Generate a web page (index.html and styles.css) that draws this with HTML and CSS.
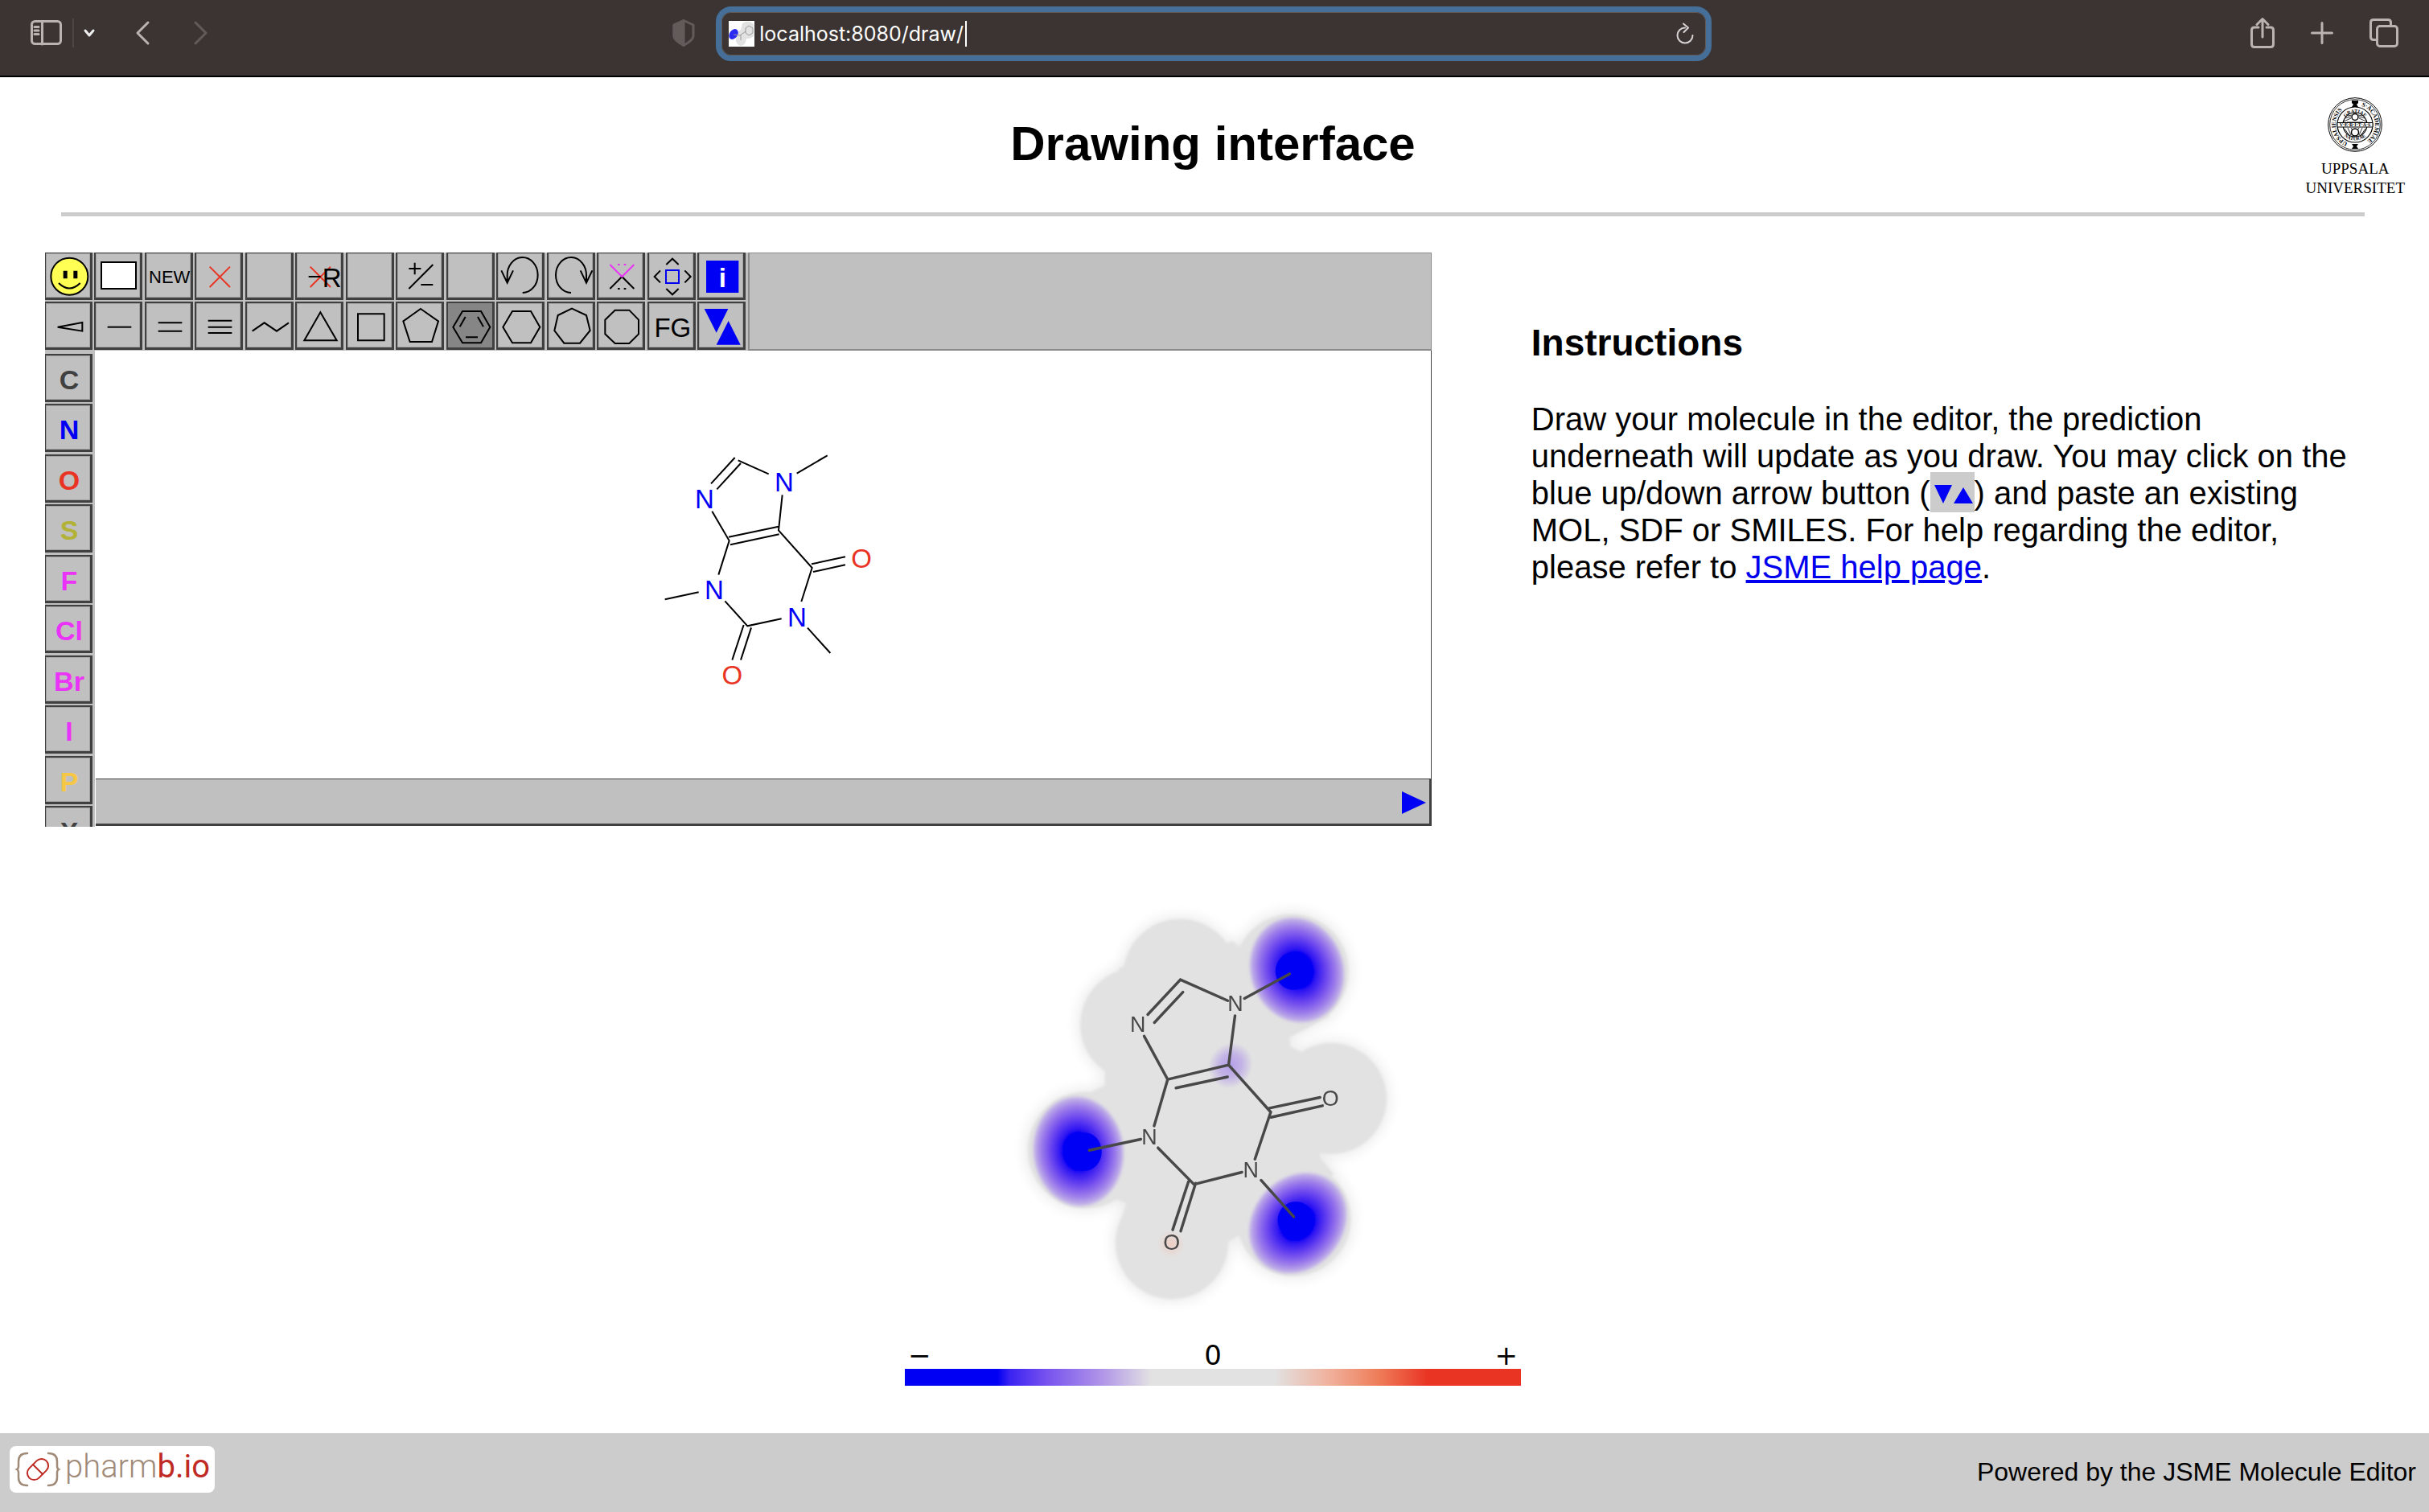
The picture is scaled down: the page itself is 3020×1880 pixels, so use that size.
FILE: index.html
```html
<!DOCTYPE html>
<html lang="en">
<head>
<meta charset="utf-8">
<meta name="viewport" content="width=device-width, initial-scale=1">
<title>Drawing interface</title>
<link rel="stylesheet" href="styles.css">
</head>
<body>
<div class="browser">
  <div class="browser-side">
    <button class="bar-btn" aria-label="Sidebar"><svg width="40" height="32" viewBox="0 0 40 32"><rect x="1.5" y="1.5" width="36" height="28" rx="4"/><path d="M14.500 2v28M5 8.500h5M5 13h5M5 17.500h5"/></svg></button>
    <span class="bar-divider"></span>
    <button class="bar-btn bar-menu" aria-label="Sidebar menu"><svg width="14" height="10" viewBox="0 0 14 10"><path class="bright" d="M2 2l5 6 5-6"/></svg></button>
    <button class="bar-btn bar-back" aria-label="Back"><svg width="18" height="30" viewBox="0 0 18 30"><path d="M16 2L3 15l13 13"/></svg></button>
    <button class="bar-btn bar-forward" aria-label="Forward"><svg class="dim" width="18" height="30" viewBox="0 0 18 30"><path d="M2 2l13 13L2 28"/></svg></button>
    <button class="bar-btn bar-shield" aria-label="Privacy report"><svg class="dim" width="28" height="34" viewBox="0 0 28 34"><path d="M14 1.500L26 7v14c0 4-6 8-12 11.500C8 29 2 25 2 21V7z"/><path class="dim-fill" d="M14 1.500v31C8 29 2 25 2 21V7z"/></svg></button>
  </div>
  <div class="address">
    <svg width="32" height="32" viewBox="0 0 32 32"><path fill="#fff" d="M0 0h32v32H0z"/><path fill="#e2e2e2" d="M17 3q8-5 14 1v15q-6 4-9 3-1 9-8 9-6-3-5-9l-2-6 8-5z"/><ellipse cx="6" cy="16.500" rx="5" ry="7" transform="rotate(35 6 16.500)" fill="#2a2af2"/><path d="M6 17l8 1 7-5M15 17v7M21 9l4-3 5 3v6l-5 3-4-3z" fill="none" stroke="#999" stroke-width="1"/></svg>
    <input class="address-input" aria-label="Address" value="localhost:8080/draw/">
    <span class="caret"></span>
    <button class="bar-btn" aria-label="Reload"><svg width="24" height="28" viewBox="0 0 24 28"><path class="thin" d="M12 6.500A9.500 9.500 0 1 0 21.500 16M10 1.500l6 5-5.500 5.500"/></svg></button>
  </div>
  <div class="browser-side browser-right">
    <button class="bar-btn" aria-label="Share"><svg width="30" height="38" viewBox="0 0 30 38"><path d="M10 12H5q-3.500 0-3.500 3.500V33q0 3.500 3.500 3.500h20q3.500 0 3.500-3.500V15.500q0-3.500-3.500-3.500h-5M15 24V2M8 8.500L15 1.500l7 7"/></svg></button>
    <button class="bar-btn" aria-label="New tab"><svg width="28" height="28" viewBox="0 0 28 28"><path d="M14 1.500v25M1.500 14h25"/></svg></button>
    <button class="bar-btn" aria-label="Tab overview"><svg width="36" height="36" viewBox="0 0 36 36"><path d="M9 26.500H5q-3.500 0-3.500-3.500V5q0-3.500 3.500-3.500h18q3.500 0 3.500 3.500v4"/><rect x="9.500" y="9.500" width="25" height="25" rx="3.500"/></svg></button>
  </div>
</div>

<header class="page-header">
  <h1>Drawing interface</h1>
  <div class="university">
    <svg width="68" height="68" viewBox="-34 -34 68 68">
      <defs><path id="ring" d="M0 24.500A24.500 24.500 0 1 1 1 24.500"/><path id="arcTop" d="M-15 0A15 15 0 0 1 15 0"/><path id="arcBottom" d="M-19.500 0A19.500 19.500 0 0 0 19.500 0"/></defs>
      <g fill="none" stroke="#000"><circle r="33.300" stroke-width="1"/><circle r="31.300" stroke-width=".8"/><circle r="22" stroke-width="1.200"/><circle r="15" stroke-width="1.200"/><circle cy="-9.500" r="4" stroke-width="1.500"/><circle cy="9.500" r="4.500" stroke-width="1.500"/>
      <path stroke-width=".8" d="M-14-4L-5-8M-12-8L-5-10M-9-11L-4-12M14-4L5-8M12-8L5-10M9-11L4-12M-13 5L-8 12M-9 4L-5 13M9 4L5 13M13 5L8 12M-5 4l2 3M5 4L3 7M-10-3h20"/></g>
      <path d="M-4-30h8v3L2-25l2 3h-8l2-3-2-2zM-4 24h8l-2 3 2 3h-8l2-3z"/>
      <path d="M-22-2.500h44v5.500h-44z" fill="#fff" stroke="#000" stroke-width="1"/>
      <g class="seal-text"><text font-size="7.500"><textPath href="#ring" startOffset="6%">UPSALIENSIS</textPath></text><text font-size="7.500"><textPath href="#ring" startOffset="55%">S·ACADEMIAE</textPath></text><text font-size="6"><textPath href="#arcTop" startOffset="50%" text-anchor="middle">GRATIAE</textPath></text><text font-size="6"><textPath href="#arcBottom" startOffset="50%" text-anchor="middle">NATURAE</textPath></text><text y="2.300" font-size="6" text-anchor="middle">V·E·R·I·T·A·S</text></g>
    </svg>
    <span>UPPSALA</span>
    <span>UNIVERSITET</span>
  </div>
</header>
<hr class="rule">

<main>
  <div class="workspace">
    <section class="editor" aria-label="Molecule editor">
      <div class="toolbar">
        <div class="tools">
          <button class="tool" aria-label="Smiles"><svg viewBox="6 6 165 165"><circle cx="94" cy="92" r="69" fill="#ffff54"/><path d="M54 117Q94 156 134 117"/><path class="solid" d="M71 71h15v29H71zM109 71h15v29h-15z"/></svg></button>
          <button class="tool" aria-label="Blank"><svg viewBox="6 6 165 165"><rect x="27" y="39" width="129" height="99" fill="#fff"/></svg></button>
          <button class="tool" aria-label="New"><svg viewBox="6 6 165 165"><text x="15" y="116" font-size="66">NEW</text></svg></button>
          <button class="tool" aria-label="Delete"><svg viewBox="6 6 165 165"><path class="red" d="M56 56l76 76M132 56l-76 76"/></svg></button>
          <button class="tool" aria-label="Unused"></button>
          <button class="tool" aria-label="Delete group"><svg viewBox="6 6 165 165"><path class="red" d="M56 56l76 76M132 56l-76 76"/><path d="M50 93h45"/><text x="101" y="131" font-size="99">R</text></svg></button>
          <button class="tool" aria-label="Unused"></button>
          <button class="tool" aria-label="Charge"><svg viewBox="6 6 165 165"><path d="M49 63h45M71 41v44M49 138l90-90M94 123h45"/></svg></button>
          <button class="tool" aria-label="Unused"></button>
          <button class="tool" aria-label="Undo"><svg viewBox="6 6 165 165"><path d="M98 153A57 66 0 1 0 41 90V112M19 70l22 46 22-46"/></svg></button>
          <button class="tool" aria-label="Redo"><svg viewBox="6 6 165 165"><path d="M90 153A57 66 0 1 1 147 90V112M125 70l22 46 22-46"/></svg></button>
          <button class="tool" aria-label="Spiro"><svg viewBox="6 6 165 165"><path d="M49 138l45-45 45 45"/><path class="pink" d="M49 48l45 45 45-45M78 48h8M101 48h8"/><path d="M78 138h8M101 138h8"/></svg></button>
          <button class="tool" aria-label="Move"><svg viewBox="6 6 165 165"><path d="M70 48l23-22 23 22M70 138l23 22 23-22M48 70L26 93l22 22M139 70l22 23-22 22"/><rect x="69" y="69" width="48" height="48" class="blue-line"/></svg></button>
          <button class="tool" aria-label="Information"><svg viewBox="6 6 165 165"><path class="blue" d="M33 33h121v120H33z"/><text x="94" y="131" font-size="99" font-weight="bold" text-anchor="middle" class="white">i</text></svg></button>
          <button class="tool" aria-label="Stereo bond"><svg viewBox="6 6 165 165"><path d="M50 95l92-17v32z"/></svg></button>
          <button class="tool" aria-label="Single bond"><svg viewBox="6 6 165 165"><path d="M50 95h89"/></svg></button>
          <button class="tool" aria-label="Double bond"><svg viewBox="6 6 165 165"><path d="M50 79h89M50 110h89"/></svg></button>
          <button class="tool" aria-label="Triple bond"><svg viewBox="6 6 165 165"><path d="M50 71h89M50 95h89M50 117h89"/></svg></button>
          <button class="tool" aria-label="Chain"><svg viewBox="6 6 165 165"><path d="M26 110l45-31 46 31 45-31"/></svg></button>
          <button class="tool" aria-label="Three ring"><svg viewBox="6 6 165 165"><path d="M94 40L34 145h121z"/></svg></button>
          <button class="tool" aria-label="Four ring"><svg viewBox="6 6 165 165"><path d="M45 46h98v99H45z"/></svg></button>
          <button class="tool" aria-label="Five ring"><svg viewBox="6 6 165 165"><path d="M93 27l66 46-24 77H53L28 73z"/></svg></button>
          <button class="tool tool-active" aria-label="Benzene ring" aria-pressed="true"><svg viewBox="6 6 165 165"><path d="M25 95l35-59h69l34 59-34 59H60zM50 94l21-37M117 57l21 37M72 133h45"/></svg></button>
          <button class="tool" aria-label="Six ring"><svg viewBox="6 6 165 165"><path d="M25 95l35-59h69l34 59-34 59H60z"/></svg></button>
          <button class="tool" aria-label="Seven ring"><svg viewBox="6 6 165 165"><path d="M93 26l54 25 14 57-38 47H64l-36-47 13-57z"/></svg></button>
          <button class="tool" aria-label="Eight ring"><svg viewBox="6 6 165 165"><path d="M68 32h53l35 36v53l-35 35H68l-37-35V68z"/></svg></button>
          <button class="tool" aria-label="Functional groups"><svg viewBox="6 6 165 165"><text x="94" y="131" font-size="99" text-anchor="middle">FG</text></svg></button>
          <button class="tool" aria-label="Import and export"><svg viewBox="6 6 165 165"><path class="blue" d="M26 27h89l-44 89zM116 72l45 89H71z"/></svg></button>
        </div>
        <div class="toolbar-rest"></div>
      </div>
      <div class="atoms">
        <button class="tool atom-c">C</button>
        <button class="tool atom-n">N</button>
        <button class="tool atom-o">O</button>
        <button class="tool atom-s">S</button>
        <button class="tool atom-halogen">F</button>
        <button class="tool atom-halogen">Cl</button>
        <button class="tool atom-halogen">Br</button>
        <button class="tool atom-halogen">I</button>
        <button class="tool atom-p">P</button>
        <button class="tool atom-c">X</button>
      </div>
      <div class="canvas">
        <svg class="molecule" viewBox="0 0 1080 1080">
          <path d="M312 244l89-97M334 265l89-97M413 157l114 51M632 206l114-67M578 286l-14 132 125 140-40 126M316 347l64 110-40 127M378 443l186-39M384 472l182-39M687 544l126-27M693 573l120-26M140 676l126-27M364 682l84 93 127-27M672 782l85 94M434 771l-43 131M462 781l-39 121"/>
          <g class="nitrogen"><text x="288" y="336">N</text><text x="585" y="272">N</text><text x="324" y="675">N</text><text x="633" y="777">N</text></g>
          <g class="oxygen"><text x="873" y="558">O</text><text x="391" y="993">O</text></g>
        </svg>
      </div>
      <div class="status"><button class="play" aria-label="Next"><svg width="30" height="28" viewBox="0 0 30 28"><path fill="#0000f5" d="M0 0l30 14L0 28z"/></svg></button></div>
    </section>
    <section class="help">
      <h2>Instructions</h2>
      <p>Draw your molecule in the editor, the prediction underneath will update as you draw. You may click on the blue up/down arrow button (<span class="arrows"><svg width="48" height="24" viewBox="0 0 48 24"><path fill="#0000f5" d="M0 0h22L11 23zM24 23l12-20 12 20z"/></svg></span>) and paste an existing MOL, SDF or SMILES. For help regarding the editor, please refer to <a href="#help">JSME help page</a>.</p>
    </section>
  </div>

  <section class="prediction" aria-label="Prediction">
    <svg class="heatmap" viewBox="0 0 1568 1568">
      <defs>
        <filter id="soft" x="-20%" y="-20%" width="140%" height="140%"><feGaussianBlur stdDeviation="22"/></filter>
        <filter id="edge" x="-20%" y="-20%" width="140%" height="140%"><feGaussianBlur stdDeviation="5"/></filter>
        <radialGradient id="neg"><stop offset="0" stop-color="#0000f5"/><stop offset=".35" stop-color="#0000f5"/><stop offset=".38" stop-color="#2a12f3"/><stop offset=".6" stop-color="#6b45ef"/><stop offset=".8" stop-color="#9c7cea"/><stop offset=".94" stop-color="#c0afe7"/><stop offset="1" stop-color="#e2e2e2"/></radialGradient>
        <radialGradient id="weak"><stop offset="0" stop-color="#b49fe9"/><stop offset=".5" stop-color="#c2b3e6"/><stop offset="1" stop-color="#e2e2e2"/></radialGradient>
        <radialGradient id="pos"><stop offset="0" stop-color="#edcdc4"/><stop offset="1" stop-color="#e2e2e2"/></radialGradient>
        <g id="cloud"><circle cx="660" cy="330" r="206"/><circle cx="505" cy="505" r="205"/><circle cx="858" cy="430" r="203"/><circle cx="1062" cy="312" r="206"/><circle cx="1205" cy="772" r="200"/><circle cx="320" cy="958" r="210"/><circle cx="1070" cy="1207" r="206"/><circle cx="630" cy="1293" r="203"/><path d="M440 300L850 205L1200 475L1100 528L1055 550L1058 585L1085 598L1150 640L1165 985L1215 1045L850 1280L832 1290L432 1260L465 1150L330 1100L345 745L388 725L388 690z"/></g>
      </defs>
      <use href="#cloud" class="halo" filter="url(#soft)"/>
      <use href="#cloud" class="cloud" filter="url(#edge)"/>
      <g filter="url(#edge)">
        <ellipse cx="1082" cy="308" rx="172" ry="197" transform="rotate(-20 1082 308)" fill="url(#neg)"/>
        <ellipse cx="293" cy="963" rx="167" ry="203" transform="rotate(-6 293 963)" fill="url(#neg)"/>
        <ellipse cx="1085" cy="1222" rx="167" ry="199" transform="rotate(40 1085 1222)" fill="url(#neg)"/>
      </g>
      <g fill="#0000f5"><ellipse cx="1068" cy="312" rx="64" ry="68"/><ellipse cx="315" cy="964" rx="62" ry="69"/><ellipse cx="1077" cy="1211" rx="65" ry="67"/></g>
      <ellipse cx="842" cy="653" rx="78" ry="86" transform="rotate(35 842 653)" fill="url(#weak)"/>
      <circle cx="627" cy="1297" r="50" fill="url(#pos)"/>
      <path class="bonds" d="M543 469l118-126 171 76M567 498l103-110M892 411l163-89M858 473l-23 178 152 170-57 170M530 547l85 156-49 168M615 703l220-52M645 734l186-40M982 807l183-39M988 840l186-42M332 959l186-40M580 950l130 132 173-44M952 1067l118 132M690 1072l-57 174M716 1078l-54 173"/>
      <g class="atoms-text"><text x="507" y="531">N</text><text x="859" y="457">N</text><text x="549" y="938">N</text><text x="915" y="1056">N</text><text x="1203" y="799">O</text><text x="629" y="1317">O</text></g>
    </svg>
    <div class="legend">
      <div class="legend-labels"><span>−</span><span>0</span><span>+</span></div>
      <div class="legend-bar"></div>
    </div>
  </section>
</main>

<footer>
  <a class="pharmbio" href="#pharmbio" aria-label="pharmb.io">
    <svg width="56" height="44" viewBox="0 0 56 44" fill="none" stroke-width="2.500" stroke-linecap="round"><path stroke="#a08a78" d="M14 2Q3 2 3 12v6q0 3-2 4 2 1 2 4v6q0 10 11 10M40 2q11 0 11 10v6q0 3 2 4-2 1-2 4v6q0 10-11 10"/><g stroke="#bf2a23" stroke-width="2" transform="rotate(-45 27 22)"><rect x="12" y="13.500" width="30" height="17" rx="8.500"/><path d="M27 13.500v17"/></g></svg>
    <span class="pharm">pharm<b>b.io</b></span>
  </a>
  <span class="credit">Powered by the JSME Molecule Editor</span>
</footer>
</body>
</html>
```
FILE: styles.css
```css
* { box-sizing: border-box; }

body {
  display: flex;
  flex-direction: column;
  min-height: 100vh;
  margin: 0;
  background: #fff;
  color: #000;
  font-family: "Liberation Sans", Arial, sans-serif;
}

button {
  margin: 0;
  padding: 0;
  font: inherit;
}

svg { display: block; overflow: visible; }

/* Browser bar */
.browser {
  display: grid;
  grid-template-columns: 1fr 41% 1fr;
  height: 96px;
  padding: 8px 2px 18px 0;
  background: #3b3433;
  border-bottom: 2px solid #000;
}

.browser-side {
  display: flex;
  align-items: center;
  padding: 0 26px 2px 38px;
}

.browser-right {
  justify-content: flex-end;
  gap: 45px;
  padding: 0 36px 2px;
}

.bar-btn {
  display: block;
  border: 0;
  background: none;
}

.bar-btn path, .bar-btn rect {
  fill: none;
  stroke: #bab3b2;
  stroke-width: 3;
  stroke-linecap: round;
  stroke-linejoin: round;
}

.bar-btn .bright { stroke: #eee; }
.bar-btn .thin { stroke: #d8d4d4; stroke-width: 2; }
.bar-btn .dim path { stroke: #635b5a; }
.bar-btn .dim .dim-fill { fill: #635b5a; }

.bar-divider {
  width: 2px;
  height: 36px;
  margin: 0 12px;
  background: #4d4645;
}

.bar-back { margin-left: 50px; }
.bar-forward { margin-left: 55px; }
.bar-shield { margin-left: auto; }

.address {
  display: flex;
  align-items: center;
  height: 68px;
  padding: 0 14px 0 9px;
  border: 7px solid #456f98;
  border-radius: 19px;
  box-shadow: inset 0 0 0 1px #625a57;
}

.address-input {
  width: 256px;
  margin-left: 6px;
  padding: 0;
  border: 0;
  outline: 0;
  background: none;
  color: #fff;
  font: 25px "Inter", sans-serif;
}

.address .caret {
  width: 2px;
  height: 32px;
  margin-right: auto;
  background: #fff;
}

/* Page header */
.page-header {
  display: grid;
  grid-template-columns: 1fr auto 1fr;
  padding: 25px 30px 18px 26px;
}

h1 {
  grid-column: 2;
  margin: 22px 0 0;
  font-size: 60px;
  line-height: 72px;
}

.university {
  display: flex;
  flex-direction: column;
  align-items: center;
  justify-self: end;
  font: 19px/24px "Liberation Serif", serif;
}

.university svg { margin-bottom: 9px; }
.seal-text { font-family: "Liberation Serif", serif; font-weight: bold; }

.rule {
  align-self: stretch;
  height: 5px;
  margin: 0 80px 0 76px;
  border: 0;
  background: #ccc;
}

/* Editor and help */
.workspace {
  display: grid;
  grid-template-columns: 5fr 3fr;
  column-gap: 124px;
  padding: 45px 82px 0 56px;
}

.editor {
  display: grid;
  grid-template: 122px 532px 60px / 62px 1fr;
  overflow: hidden;
}

.toolbar {
  display: flex;
  grid-column: 1 / -1;
  background: #c0c0c0;
}

.tools {
  display: grid;
  grid-template-columns: repeat(7, 62px 63px);
  grid-auto-rows: 62px;
  margin: -1px 0 0 -1px;
}

.toolbar-rest {
  flex: 1;
  border: 2px solid #8a8a8a;
  border-width: 1px 1px 2px 2px;
}

.tool {
  width: 60px;
  height: 60px;
  border: 2px solid #404040;
  border-width: 2px 3px 3px 2px;
  background: #c0c0c0;
  box-shadow: inset 0 0 0 1px #a4a4a4;
}

.tool svg {
  width: 55px;
  height: 55px;
  fill: none;
  stroke: #000;
  stroke-width: 6;
}

.tool text { fill: #000; stroke: none; }
.tool .white { fill: #fff; }
.tool .red { stroke: #e93323; }
.tool .pink { stroke: #ea33f7; }
.tool .solid { fill: #000; stroke: none; }
.tool .blue { fill: #0000f5; stroke: none; }
.tool .blue-line { stroke: #0000f5; }
.tool-active { background: #868686; box-shadow: none; }

.atoms {
  display: grid;
  grid-row: 2 / 4;
  grid-auto-rows: 62px 63px;
  height: 592px;
  padding-top: 4px;
  background: #c0c0c0;
}

.atoms .tool {
  margin-left: -1px;
  padding: 4px 0 0 3px;
  font-size: 34px;
  font-weight: bold;
  line-height: 48px;
}

.atom-c { color: #404040; }
.atom-n { color: #0000f5; }
.atom-o { color: #e93323; }
.atom-s { color: #b2b236; }
.atom-halogen { color: #ea33f7; }
.atom-p { color: #f6c745; }

.canvas {
  display: flex;
  align-items: center;
  justify-content: center;
  padding: 0 0 4px 24px;
  border-right: 1px solid #404040;
}

.molecule { width: 360px; height: 360px; }
.molecule path { fill: none; stroke: #000; stroke-width: 6; }
.molecule text { font-size: 99px; text-anchor: middle; }
.nitrogen { fill: #0000f5; }
.oxygen { fill: #e93323; }

.status {
  display: flex;
  align-items: center;
  justify-content: flex-end;
  height: 59px;
  margin-left: 1px;
  padding: 2px 4px 0 0;
  border: 1px solid #404040;
  border-width: 1px 3px 3px 0;
  background: #c0c0c0;
}

.play { border: 0; background: none; }

.help { padding-top: 85px; }

h2 {
  margin: 0 0 45px;
  font-size: 46px;
  line-height: 54px;
}

.help p {
  margin: 0;
  font-size: 40px;
  line-height: 46px;
}

.help a { color: #0000ee; }

.arrows {
  padding: 4px 2px 2px 5px;
  background: #ccc;
}

.arrows svg { display: inline; vertical-align: baseline; }

/* Prediction */
.prediction {
  display: flex;
  flex-direction: column;
  align-items: center;
  padding: 72px 0 59px;
}

.heatmap { width: 540px; height: 540px; }
.halo { fill: #ececec; stroke: #ececec; stroke-width: 24; }
.cloud { fill: #e2e2e2; }
.bonds { fill: none; stroke: #484848; stroke-width: 10; stroke-linecap: round; }
.atoms-text { fill: #484848; font-size: 78px; text-anchor: middle; }

.legend {
  width: 766px;
  max-width: 100%;
  margin-right: 4px;
}

.legend-labels {
  display: flex;
  justify-content: space-between;
  padding: 28px 4px 0;
  font: 34px/34px "DejaVu Sans", sans-serif;
}

.legend-bar {
  height: 21px;
  background: linear-gradient(90deg, #0000f5 15%, #3a22f2 17%, #7752ee 23%, #b095e8 32%, #e2e2e2 40%, #e2e2e2 60%, #f0b09b 69%, #ee7c58 77%, #e93323 85%);
}

footer {
  display: flex;
  align-items: center;
  justify-content: space-between;
  height: 98px;
  margin-top: auto;
  padding: 0 16px 0 12px;
  background: #ccc;
  font-size: 32px;
}

.credit { padding-bottom: 2px; }

.pharmbio {
  display: flex;
  align-items: center;
  height: 58px;
  margin-bottom: 8px;
  padding: 0 6px 0 8px;
  border-radius: 8px;
  background: #fff;
  text-decoration: none;
}

.pharm {
  margin: 0 0 8px 5px;
  color: #a08a78;
  font: 300 40px "Roboto", sans-serif;
}

.pharm b { color: #bf2a23; font-weight: 400; }
```
